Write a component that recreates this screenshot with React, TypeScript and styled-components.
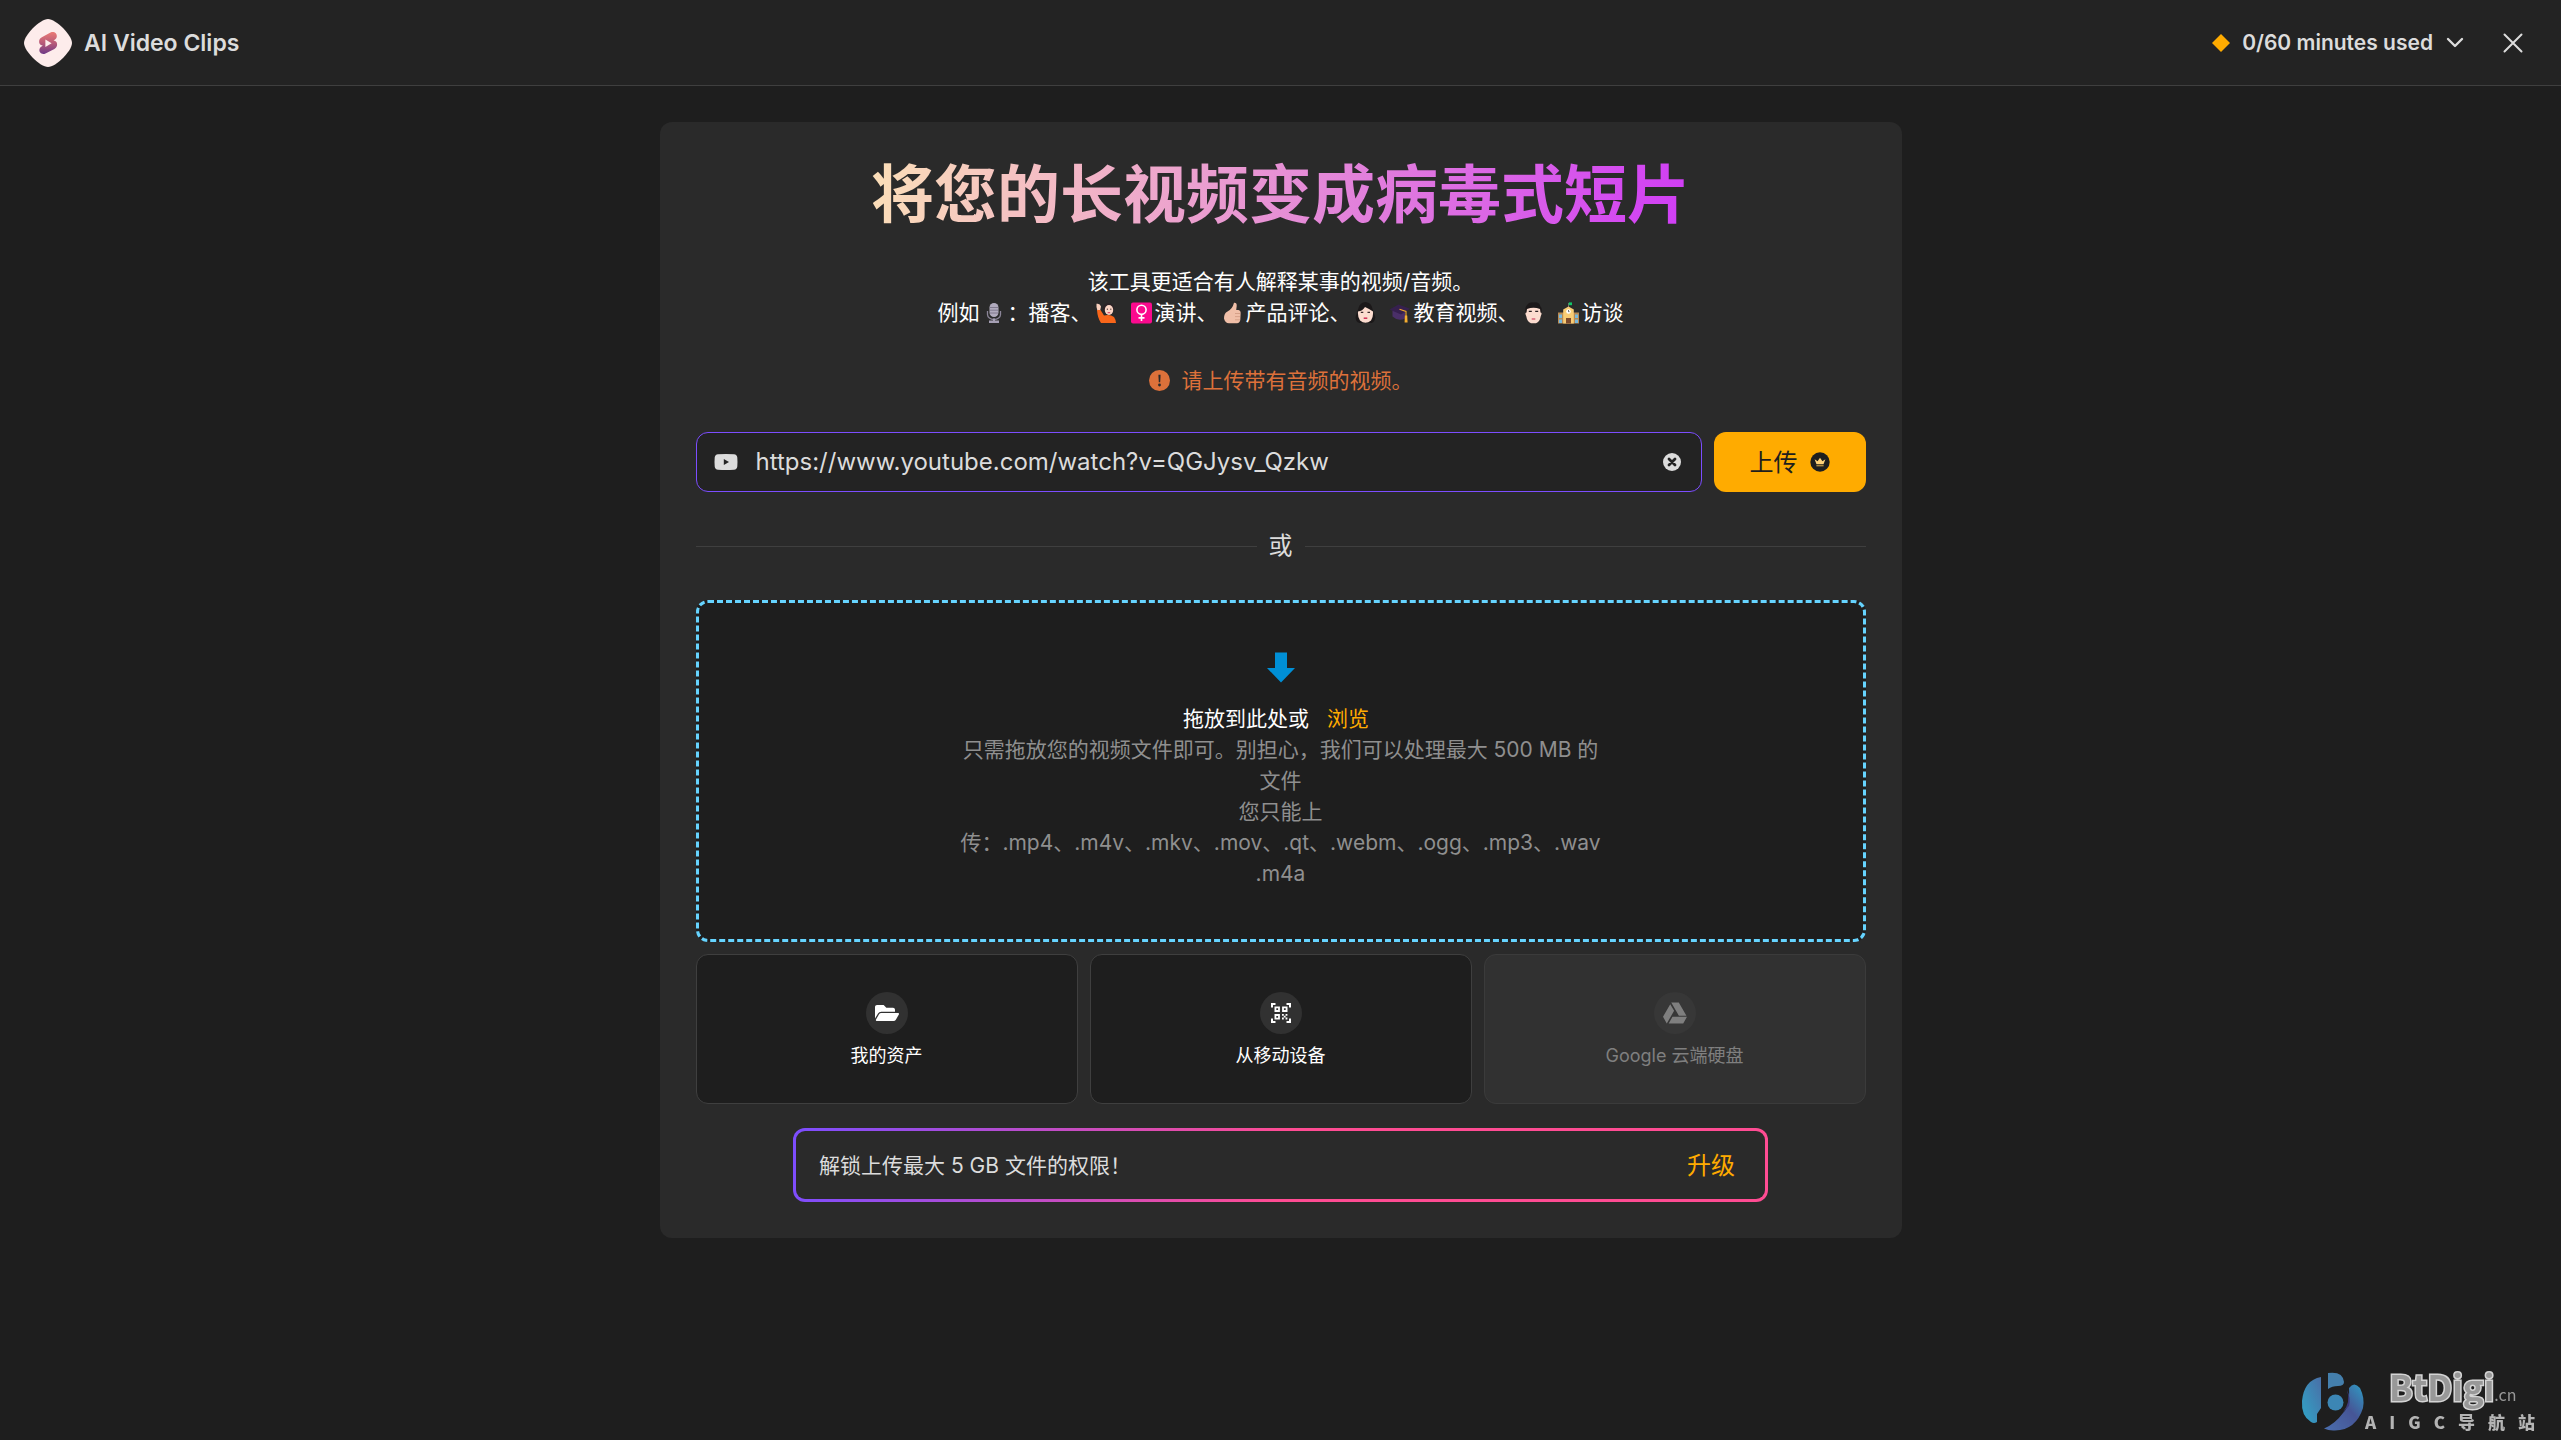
import React, { useState } from 'react';
import styled, { createGlobalStyle, css } from 'styled-components';
import { FaFolderOpen, FaGoogleDrive } from 'react-icons/fa';

const GlobalStyle = createGlobalStyle`
  *, *::before, *::after { box-sizing: border-box; }
  body {
    margin: 0;
    background: #1e1e1e;
    color: #dcdcdc;
    font-family: Inter, 'Noto Sans CJK SC', sans-serif;
    font-size: 21px;
    line-height: 31px;
  }
  button, input { font: inherit; color: inherit; }
  button { padding: 0; border: 0; background: none; cursor: pointer; }
  h1, h2, p { margin: 0; }
  svg { display: block; flex: none; }
`;

const Header = styled.header`
  display: flex;
  align-items: center;
  justify-content: space-between;
  height: 86px;
  padding: 0 36px 0 24px;
  background: #232323;
  border-bottom: 1px solid #3f3f3f;
`;

const Brand = styled.div`
  display: flex;
  align-items: center;
  gap: 12px;
`;

const BrandName = styled.h2`
  font-size: 23px;
  line-height: 36px;
  font-weight: 600;
`;

const HeaderActions = styled.div`
  display: flex;
  align-items: center;
  gap: 36px;
`;

const UsageButton = styled.button`
  display: flex;
  align-items: center;
  gap: 12px;
  font-weight: 600;
`;

const CloseButton = styled.button`
  display: flex;
`;

const Main = styled.main`
  display: flex;
  justify-content: center;
  padding: 36px;
`;

const Card = styled.section`
  display: flex;
  flex-direction: column;
  width: 100%;
  max-width: 1242px;
  padding: 36px;
  border-radius: 12px;
  background: #2a2a2a;
`;

const Title = styled.h1`
  align-self: center;
  font-size: 63px;
  line-height: 72px;
  font-weight: 700;
  color: transparent;
  background: linear-gradient(98deg, #fbdfb8 0%, #f2b6c6 25%, #e488d8 55%, #d03cf6 100%);
  background-clip: text;
  -webkit-background-clip: text;
`;

const Intro = styled.p`
  margin-top: 36px;
  text-align: center;
  color: #ffffff;
`;

const EmojiSvg = styled.svg<{ $spaced?: boolean }>`
  display: inline-block;
  vertical-align: -4px;
  margin-left: ${(p) => (p.$spaced ? '7px' : '0')};
`;

const Notice = styled.p`
  display: flex;
  align-items: center;
  justify-content: center;
  gap: 12px;
  margin: 37px 0 36px;
  color: #dd713a;
`;

const UrlForm = styled.form`
  display: flex;
  gap: 12px;
`;

const UrlField = styled.label`
  display: flex;
  flex: 1;
  align-items: center;
  gap: 18px;
  height: 60px;
  padding: 0 20px 0 17px;
  border: 1px solid #7c4dff;
  border-radius: 12px;
  background: #232323;
`;

const UrlInput = styled.input`
  flex: 1;
  min-width: 0;
  padding: 0;
  border: 0;
  outline: 0;
  background: none;
  font-size: 24px;
  line-height: 36px;
`;

const UploadButton = styled.button`
  display: flex;
  align-items: center;
  justify-content: center;
  gap: 12px;
  width: 152px;
  height: 60px;
  border-radius: 12px;
  background: #ffab00;
  color: #1e1e1e;
  font-size: 24px;
`;

const Divider = styled.div`
  display: flex;
  align-items: center;
  gap: 12px;
  margin: 36px 0;
  font-size: 24px;
  line-height: 36px;
  &::before, &::after {
    content: '';
    flex: 1;
    height: 1px;
    background: #3f3f3f;
  }
`;

const DropZone = styled.div`
  display: flex;
  flex-direction: column;
  align-items: center;
  padding: 48px 24px 50px;
  border: 3px dashed #66d4ff;
  border-radius: 12px;
  background: #1e1e1e;
  color: #8f8f8f;
  text-align: center;
`;

const DropPrompt = styled.div`
  display: flex;
  gap: 9px;
  margin-top: 20px;
  color: #ffffff;
`;

const LinkButton = styled.button<{ $large?: boolean }>`
  padding: 0 9px;
  color: #ffab00;
  font-size: ${(p) => (p.$large ? '24px' : '21px')};
`;

const Sources = styled.div`
  display: grid;
  grid-template-columns: repeat(3, 1fr);
  gap: 12px;
  margin-top: 12px;
`;

const SourceButton = styled.button`
  display: flex;
  flex-direction: column;
  align-items: center;
  justify-content: center;
  gap: 8px;
  height: 150px;
  padding-top: 4px;
  border: 1px solid #3f3f3f;
  border-radius: 12px;
  background: #1e1e1e;
  color: #ffffff;
  font-size: 18px;
  line-height: 28px;
  &:disabled {
    background: #313131;
    border-color: #3b3b3b;
    color: #7f7f7f;
    cursor: default;
  }
`;

const SourceIcon = styled.span<{ $muted?: boolean }>`
  display: flex;
  align-items: center;
  justify-content: center;
  width: 42px;
  height: 42px;
  border-radius: 50%;
  background: ${(p) => (p.$muted ? '#373737' : '#313131')};
`;

const Banner = styled.div`
  display: flex;
  align-items: center;
  justify-content: space-between;
  align-self: center;
  width: 100%;
  max-width: 975px;
  height: 74px;
  margin-top: 24px;
  padding: 0 21px 0 23px;
  border: 3px solid transparent;
  border-radius: 12px;
  background:
    linear-gradient(#2a2a2a, #2a2a2a) padding-box,
    linear-gradient(100deg, #7c4dff 0%, #ff4c93 50%) border-box;
`;

const Watermark = styled.aside`
  position: fixed;
  right: 26px;
  bottom: 8px;
  display: flex;
  align-items: flex-end;
  color: #989898;
  font-family: 'Noto Sans CJK SC', sans-serif;
`;

const outlined = css`
  -webkit-text-stroke: 3px #d4d4d4;
  paint-order: stroke;
`;

const WatermarkText = styled.div`
  display: flex;
  flex-direction: column;
  width: 170px;
`;

const WatermarkName = styled.div`
  display: flex;
  align-items: baseline;
  padding-left: 24px;
  font-size: 35px;
  line-height: 36px;
  font-weight: 700;
  ${outlined}
`;

const WatermarkSuffix = styled.small`
  font-size: 16px;
  font-weight: 400;
  -webkit-text-stroke: 0;
`;

const WatermarkTagline = styled.div`
  display: flex;
  justify-content: space-between;
  color: #b4b4b4;
  font-size: 17px;
  line-height: 20px;
  font-weight: 900;
`;

const BrandLogo = () => (
  <svg width="48" height="48" viewBox="0 0 48 48" aria-hidden="true">
    <defs>
      <linearGradient id="brand" x1="0" y1="0" x2="0" y2="1">
        <stop offset="0" stopColor="#ea7a75" />
        <stop offset="0.5" stopColor="#b85a78" />
        <stop offset="1" stopColor="#6f3a86" />
      </linearGradient>
    </defs>
    <path d="M24 0C32 0 48 16 48 24S32 48 24 48 0 32 0 24 16 0 24 0Z" fill="#fdeceb" />
    <path
      d="M26.500 13.600C30 12 33.200 14.500 32.800 17.600C32.600 19.300 31.500 20.400 30 21.200L29.500 21.500C32 21.700 33.600 23.900 33 26.600C32.700 28.200 31.700 29.200 30.400 29.900L21.500 34.400C18 36 15 33.600 15.400 30.500C15.600 28.800 16.700 27.700 18.200 26.900L18.700 26.600C16 26.300 14.600 24.100 15.200 21.500C15.600 19.900 16.500 19 17.800 18.200Z"
      fill="url(#brand)"
    />
    <path d="M21.400 20.600V28L27.600 24.300Z" fill="#fdeceb" />
  </svg>
);

const Diamond = () => (
  <svg width="18" height="18" viewBox="0 0 18 18" aria-hidden="true">
    <path d="M9 0L18 9L9 18L0 9Z" fill="#ffab00" />
  </svg>
);

const Chevron = () => (
  <svg width="20" height="20" viewBox="0 0 20 20" fill="none" stroke="#dcdcdc" strokeWidth="2.4" aria-hidden="true">
    <path d="M3 6L10 13L17 6" strokeLinecap="round" strokeLinejoin="round" />
  </svg>
);

const Cross = () => (
  <svg width="24" height="24" viewBox="0 0 24 24" fill="none" stroke="#dcdcdc" strokeWidth="2" aria-hidden="true">
    <path d="M3.500 3.500L20.500 20.500M20.500 3.500L3.500 20.500" strokeLinecap="round" />
  </svg>
);

const Alert = () => (
  <svg width="21" height="21" viewBox="0 0 21 21" aria-hidden="true">
    <circle cx="10.500" cy="10.500" r="10.500" fill="#dd713a" />
    <path d="M9.400 4.800H11.600L11.200 12.200H9.800Z" fill="#2a2a2a" />
    <circle cx="10.500" cy="15" r="1.400" fill="#2a2a2a" />
  </svg>
);

const VideoIcon = () => (
  <svg width="24" height="22" viewBox="0 0 24 22" aria-hidden="true">
    <path d="M4 3.200Q12 2.600 20 3.200Q23 3.400 23.300 6.500Q23.700 11 23.300 15.500Q23 18.600 20 18.800Q12 19.400 4 18.800Q1 18.600 .7 15.500Q.3 11 .7 6.500Q1 3.400 4 3.200Z" fill="#dcdcdc" />
    <path d="M9.800 7.900V14.100L15 11Z" fill="#232323" />
  </svg>
);

const ClearIcon = () => (
  <svg width="18" height="18" viewBox="0 0 18 18" aria-hidden="true">
    <circle cx="9" cy="9" r="9" fill="#dcdcdc" />
    <path d="M6 6L12 12M12 6L6 12" stroke="#232323" strokeWidth="2.800" strokeLinecap="round" />
  </svg>
);

const Crown = () => (
  <svg width="20" height="20" viewBox="0 0 20 20" aria-hidden="true">
    <circle cx="10" cy="10" r="9.700" fill="#1e1e1e" />
    <path d="M4.600 7.200L7.600 9.200L10 5.800L12.400 9.200L15.400 7.200L13.600 12H6.400Z" fill="#ffd27a" />
    <rect x="6.400" y="12.600" width="7.200" height="1.800" fill="#a8863f" />
  </svg>
);

const DownArrow = () => (
  <svg width="28" height="32" viewBox="0 0 28 32" aria-hidden="true">
    <path d="M8 1.500H20V17H28L14 31.500L0 17H8Z" fill="#008fd6" />
  </svg>
);

const QrIcon = () => (
  <svg width="20" height="20" viewBox="0 0 20 20" fill="none" stroke="#fff" strokeWidth="2" aria-hidden="true">
    <path d="M1 4.500V1H4.500M15.500 1H19V4.500M19 15.500V19H15.500M4.500 19H1V15.500" />
    <path d="M4.400 4.400H8V8H4.400ZM12 4.400H15.600V8H12ZM4.400 12H8V15.600H4.400Z" strokeWidth="1.800" />
    <path
      d="M11 11H12.800V12.800H11ZM14.600 11H16.400V12.800H14.600ZM12.800 12.800H14.600V14.600H12.800ZM11 14.600H12.800V16.400H11ZM14.600 14.600H16.400V16.400H14.600Z"
      fill="#fff"
      stroke="none"
    />
  </svg>
);

type EmojiName = 'mic' | 'hand' | 'female' | 'thumb' | 'woman' | 'cap' | 'man' | 'school';

const emojiLabels: Record<EmojiName, string> = {
  mic: '🎙️',
  hand: '🙋🏻',
  female: '♀️',
  thumb: '👍🏻',
  woman: '👩🏻',
  cap: '🎓',
  man: '👨🏻',
  school: '🏫',
};

const emojiArt: Record<EmojiName, React.ReactNode> = {
  mic: (
    <g>
      <path d="M7.500 9V12.500A6.500 5 0 0 0 20.500 12.500V9" fill="none" stroke="#8b8598" strokeWidth="1.300" />
      <rect x="9.500" y="1" width="9" height="14" rx="4.500" fill="#b1abbe" />
      <path d="M10 5.500H18M10 8.200H18M10 11H18" stroke="#736d82" strokeWidth=".8" />
      <path d="M13 16.500H15V18.500H19V21H9V18.500H13Z" fill="#a59fb4" />
    </g>
  ),
  hand: (
    <g>
      <circle cx="16.500" cy="6.500" r="5.600" fill="#2b2326" />
      <ellipse cx="17" cy="8" rx="4.200" ry="5" fill="#fbd6c6" />
      <path d="M14.800 7.200H16M18.200 7.200H19.400" stroke="#33272a" strokeWidth="1" />
      <path d="M15.600 10.700H18.200" stroke="#d8395a" strokeWidth="1" />
      <path d="M4.500 1.800Q8 1 9 4.500L8 9H5.500Q4 5 4.500 1.800Z" fill="#fbd0bd" />
      <path d="M5 8H8.500L12 13.500Q18 12 22 15Q24 18 24 21H9Q5.500 16 5 8Z" fill="#f9661a" />
    </g>
  ),
  female: (
    <g>
      <rect x="4" y=".5" width="21" height="21" rx="2" fill="#fb0a8e" />
      <circle cx="14.500" cy="7.800" r="4.600" fill="none" stroke="#fff" strokeWidth="1.600" />
      <path d="M14.500 12.400V19M11.500 15.900H17.500" stroke="#fff" strokeWidth="1.600" />
    </g>
  ),
  thumb: (
    <g>
      <path d="M16 .8Q19 .5 18.700 4L18.200 8H20.500Q23 8.500 22.600 12L22.300 18Q21.800 21 19 21.300H11Q7 21 6 16.500Q6 11 9.500 9.500Q14.500 7 16 .8Z" fill="#f0bfa8" />
      <path d="M17 11.500H22M17 14.600H22M17 17.800H22" stroke="#cf9880" strokeWidth=".8" />
    </g>
  ),
  woman: (
    <g>
      <path d="M14.500 0Q20.500 .5 21.500 7L24.300 15Q24 20 20.500 21H8.500Q4.500 20 4.500 15L7.500 6Q9 .5 14.500 0Z" fill="#1b1819" />
      <path d="M14 5Q18 6.500 22 9.500Q22.500 15 20 18.500Q14.500 23 9 18.500Q6.500 15 7 9.500Q11.500 9 14 5Z" fill="#fcdccf" />
      <path d="M9.800 10.300H12.300M16.500 10.300H19" stroke="#3c2b2d" strokeWidth="1.300" />
      <path d="M12.700 16.200H16.300" stroke="#d02d55" strokeWidth="1.500" />
    </g>
  ),
  cap: (
    <g>
      <path d="M6.500 9H19V16.500Q12.500 20 6.500 14.500Z" fill="#4a2f68" />
      <path d="M3.500 7.500L12.500 2.500L24 6.800L15 12.500Z" fill="#36204e" />
      <path d="M13.500 7.200L20 9.500V14" fill="none" stroke="#f1a62b" strokeWidth="1.100" />
      <path d="M18.800 13.500H21.200L21.600 20.500H18.600Z" fill="#f5ad30" />
    </g>
  ),
  man: (
    <g>
      <path d="M8 3Q10 -.2 14.500 .5Q20 -.5 21.500 4.500Q23.500 6 22.500 11H6.500Q5.500 5 8 3Z" fill="#1b1819" />
      <path d="M8 7Q14.500 4.500 21 7L21.500 10.500Q23.500 10.500 21.800 14Q20.800 20 17 21.200H12Q8.200 20 7.200 14Q5.500 10.500 7.500 10.500Z" fill="#fcdccf" />
      <path d="M9.800 9.300H12.800M16.200 9.300H19.200" stroke="#2b2022" strokeWidth="1.300" />
      <path d="M12.700 17H16.300" stroke="#cf4560" strokeWidth="1.200" />
    </g>
  ),
  school: (
    <g>
      <path d="M14.500 1V6" stroke="#777" strokeWidth=".9" />
      <path d="M14.800 .4H18V3.200H14.800Z" fill="#12c667" />
      <rect x="4" y="10.500" width="21" height="11" fill="#b98b54" />
      <path d="M9.200 21.500V7.500L14.500 4.500L19.800 7.500V21.500Z" fill="#f9cc74" />
      <circle cx="14.500" cy="9.500" r="2.300" fill="#fff" />
      <path d="M14.500 8V9.700H15.500" fill="none" stroke="#333" strokeWidth=".7" />
      <rect x="12" y="16" width="5" height="5.500" fill="#7d4a2b" />
      <path d="M5 12.500H8V16H5ZM21 12.500H24V16H21ZM5 17.500H8V21H5ZM21 17.500H24V21H21Z" fill="#77b8dd" />
    </g>
  ),
};

const Emoji = ({ name, spaced }: { name: EmojiName; spaced?: boolean }) => (
  <EmojiSvg $spaced={spaced} width="28" height="22" viewBox="0 0 28 22" role="img" aria-label={emojiLabels[name]}>
    {emojiArt[name]}
  </EmojiSvg>
);

const WatermarkLogo = () => (
  <svg width="64" height="60" viewBox="0 0 64 60" aria-hidden="true">
    <defs>
      <linearGradient id="wmLeft" x1="0" y1="1" x2="1" y2="0">
        <stop offset="0" stopColor="#2fa5c8" />
        <stop offset="1" stopColor="#4a6ea6" />
      </linearGradient>
      <linearGradient id="wmRight" x1="1" y1="0" x2="0" y2="1">
        <stop offset="0" stopColor="#2f9cc4" />
        <stop offset="0.45" stopColor="#465596" />
        <stop offset="1" stopColor="#4b6fae" />
      </linearGradient>
    </defs>
    <path d="M20 5Q3 8 1 29Q0 44 10 50Q13 52 16 50V42L20 36Z" fill="url(#wmLeft)" />
    <path d="M27 1Q42 -1 43 10Q43 14 37 14Q31 14 27 17Z" fill="#447fac" />
    <path d="M48 16Q53 9 59 16Q64 26 62 36Q55 58 34 58.500Q28 59 23 56.500Q34 52 42 41Q49 35 48 16Z" fill="url(#wmRight)" />
    <path d="M46 18Q50 30 42 40L48 34Q50 26 46 18Z" fill="#3b3a7c" />
    <circle cx="34.500" cy="30.500" r="8" fill="#3c86b4" />
  </svg>
);

export default function App() {
  const [url, setUrl] = useState('https://www.youtube.com/watch?v=QGJysv_Qzkw');

  return (
    <>
      <GlobalStyle />
      <Header>
        <Brand>
          <BrandLogo />
          <BrandName>AI Video Clips</BrandName>
        </Brand>
        <HeaderActions>
          <UsageButton type="button">
            <Diamond />
            0/60 minutes used
            <Chevron />
          </UsageButton>
          <CloseButton type="button" aria-label="关闭">
            <Cross />
          </CloseButton>
        </HeaderActions>
      </Header>

      <Main>
        <Card>
          <Title>将您的长视频变成病毒式短片</Title>
          <Intro>
            该工具更适合有人解释某事的视频/音频。
            <br />
            例如
            <Emoji name="mic" />
            ：播客、
            <Emoji name="hand" />
            <Emoji name="female" spaced />
            演讲、
            <Emoji name="thumb" />
            产品评论、
            <Emoji name="woman" />
            <Emoji name="cap" spaced />
            教育视频、
            <Emoji name="man" />
            <Emoji name="school" spaced />
            访谈
          </Intro>
          <Notice>
            <Alert />
            请上传带有音频的视频。
          </Notice>

          <UrlForm onSubmit={(e) => e.preventDefault()}>
            <UrlField>
              <VideoIcon />
              <UrlInput type="text" aria-label="视频链接" value={url} onChange={(e) => setUrl(e.target.value)} />
              <CloseButton type="button" aria-label="清除" onClick={() => setUrl('')}>
                <ClearIcon />
              </CloseButton>
            </UrlField>
            <UploadButton type="submit">
              上传
              <Crown />
            </UploadButton>
          </UrlForm>

          <Divider>或</Divider>

          <DropZone>
            <DownArrow />
            <DropPrompt>
              拖放到此处或
              <LinkButton type="button">浏览</LinkButton>
            </DropPrompt>
            <p>
              只需拖放您的视频文件即可。别担心，我们可以处理最大 500 MB 的
              <br />
              文件
            </p>
            <p>
              您只能上
              <br />
              传：.mp4、.m4v、.mkv、.mov、.qt、.webm、.ogg、.mp3、.wav
              <br />
              .m4a
            </p>
          </DropZone>

          <Sources>
            <SourceButton type="button">
              <SourceIcon>
                <FaFolderOpen size={24} />
              </SourceIcon>
              我的资产
            </SourceButton>
            <SourceButton type="button">
              <SourceIcon>
                <QrIcon />
              </SourceIcon>
              从移动设备
            </SourceButton>
            <SourceButton type="button" disabled>
              <SourceIcon $muted>
                <FaGoogleDrive size={24} />
              </SourceIcon>
              Google 云端硬盘
            </SourceButton>
          </Sources>

          <Banner>
            <p>解锁上传最大 5 GB 文件的权限！</p>
            <LinkButton type="button" $large>
              升级
            </LinkButton>
          </Banner>
        </Card>
      </Main>

      <Watermark>
        <WatermarkLogo />
        <WatermarkText>
          <WatermarkName>
            BtDigi<WatermarkSuffix>.cn</WatermarkSuffix>
          </WatermarkName>
          <WatermarkTagline>
            {Array.from('AIGC导航站').map((char) => (
              <span key={char}>{char}</span>
            ))}
          </WatermarkTagline>
        </WatermarkText>
      </Watermark>
    </>
  );
}
